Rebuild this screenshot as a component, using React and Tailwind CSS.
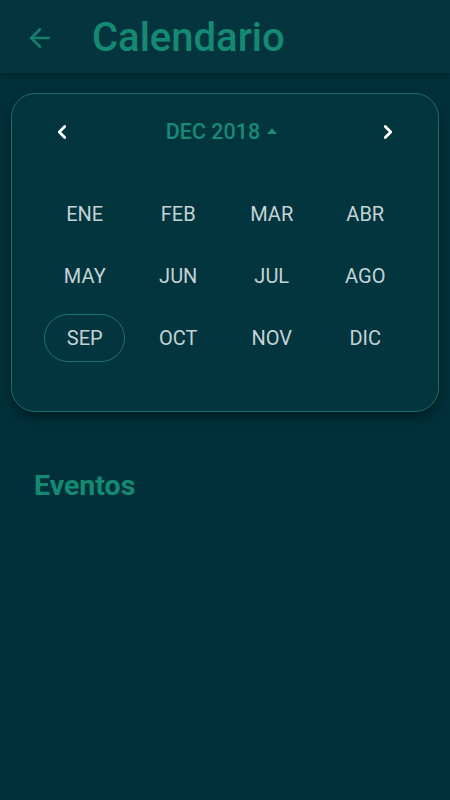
import { ChevronLeft, ChevronRight, ArrowLeft } from "lucide-react";

const months = ["ENE", "FEB", "MAR", "ABR", "MAY", "JUN", "JUL", "AGO", "SEP", "OCT", "NOV", "DIC"];

function MonthCell({ label, selected }) {
  return (
    <div className="flex h-[62px] items-center justify-center">
      {selected ? (
        <div className="flex h-[48px] w-[81px] items-center justify-center rounded-full border border-[#1d7467] text-[#c3d2d4]">
          {label}
        </div>
      ) : (
        <span className="text-[#c3d2d4]">{label}</span>
      )}
    </div>
  );
}

export default function App() {
  return (
    <div
      className="flex min-h-[800px] flex-col bg-[#01303a]"
      style={{ fontFamily: "Roboto, 'Noto Sans', sans-serif" }}
    >
      <header className="flex h-[73px] items-center bg-[#04343e] pt-[3px] shadow-[0_2px_4px_rgba(0,0,0,0.25)]">
        <ArrowLeft size={30} strokeWidth={2} className="ml-[25px] text-[#14806b]" />
        <h1 className="ml-[37px] text-[40px] font-medium leading-none text-[#158a73]">Calendario</h1>
      </header>

      <main className="px-[11px] pt-[20px]">
        <section className="rounded-[24px] border border-[#1c6e62] bg-[#03353f] px-[26px] pb-[42px] pt-[20px] shadow-[0_6px_10px_rgba(0,0,0,0.35)]">
          <div className="flex h-[36px] items-center justify-between px-[13px]">
            <ChevronLeft size={22} strokeWidth={3} className="text-white" />
            <div className="flex items-center gap-[6px] pr-[6px] text-[21.5px] font-medium text-[#178a74]">
              <span>DEC 2018</span>
              <svg width="12" height="8" viewBox="0 0 12 8" className="mb-[3px]">
                <path d="M1 7 L6 1 L11 7 Z" fill="#178a74" />
              </svg>
            </div>
            <ChevronRight size={22} strokeWidth={3} className="text-white" />
          </div>
          <div className="mt-[33px] grid grid-cols-4 text-[20px]">
            {months.map((m) => (
              <MonthCell key={m} label={m} selected={m === "SEP"} />
            ))}
          </div>
        </section>
      </main>

      <h2 className="ml-[34px] mt-[53px] text-[28.5px] font-bold text-[#158a73]">Eventos</h2>
    </div>
  );
}
